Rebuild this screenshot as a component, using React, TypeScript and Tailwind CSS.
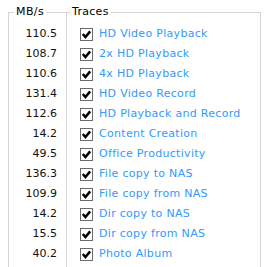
const rows = [
  { value: "110.5", label: "HD Video Playback" },
  { value: "108.7", label: "2x HD Playback" },
  { value: "110.6", label: "4x HD Playback" },
  { value: "131.4", label: "HD Video Record" },
  { value: "112.6", label: "HD Playback and Record" },
  { value: "14.2", label: "Content Creation" },
  { value: "49.5", label: "Office Productivity" },
  { value: "136.3", label: "File copy to NAS" },
  { value: "109.9", label: "File copy from NAS" },
  { value: "14.2", label: "Dir copy to NAS" },
  { value: "15.5", label: "Dir copy from NAS" },
  { value: "40.2", label: "Photo Album" },
];

function Check() {
  return (
    <span className="flex h-[13px] w-[13px] shrink-0 items-center justify-center border border-[#6a6a6a] bg-white">
      <svg viewBox="0 0 11 11" className="h-[11px] w-[11px]">
        <path d="M1.8 5 L4.4 8 L9.2 2.4" fill="none" stroke="#000" strokeWidth="2.5" />
      </svg>
    </span>
  );
}

export default function App() {
  return (
    <div className="flex h-[267px] w-[269px] overflow-hidden bg-white pl-2 pt-1 font-['DejaVu_Sans',sans-serif] text-[11px]">
      <fieldset className="w-[58px] shrink-0 border-l border-t border-[#d5d5d5] pl-[5px] pr-[9px]">
        <legend className="px-[2px] tracking-[0.4px] text-black">MB/s</legend>
        <div className="flex flex-col pt-[4px]">
          {rows.map((row, i) => (
            <div key={i} className="flex h-5 items-center justify-end text-[#111]">
              {row.value}
            </div>
          ))}
        </div>
      </fieldset>
      <fieldset className="w-[195px] shrink-0 border-x border-t border-[#d5d5d5] pl-[3px]">
        <legend className="px-[2px] tracking-[0.3px] text-black">Traces</legend>
        <div className="flex flex-col pl-[10px] pt-[4px]">
          {rows.map((row, i) => (
            <div key={i} className="flex h-5 items-center gap-[6px]">
              <Check />
              <span className="whitespace-nowrap tracking-[0.3px] text-[#3399ff]">{row.label}</span>
            </div>
          ))}
        </div>
      </fieldset>
    </div>
  );
}
